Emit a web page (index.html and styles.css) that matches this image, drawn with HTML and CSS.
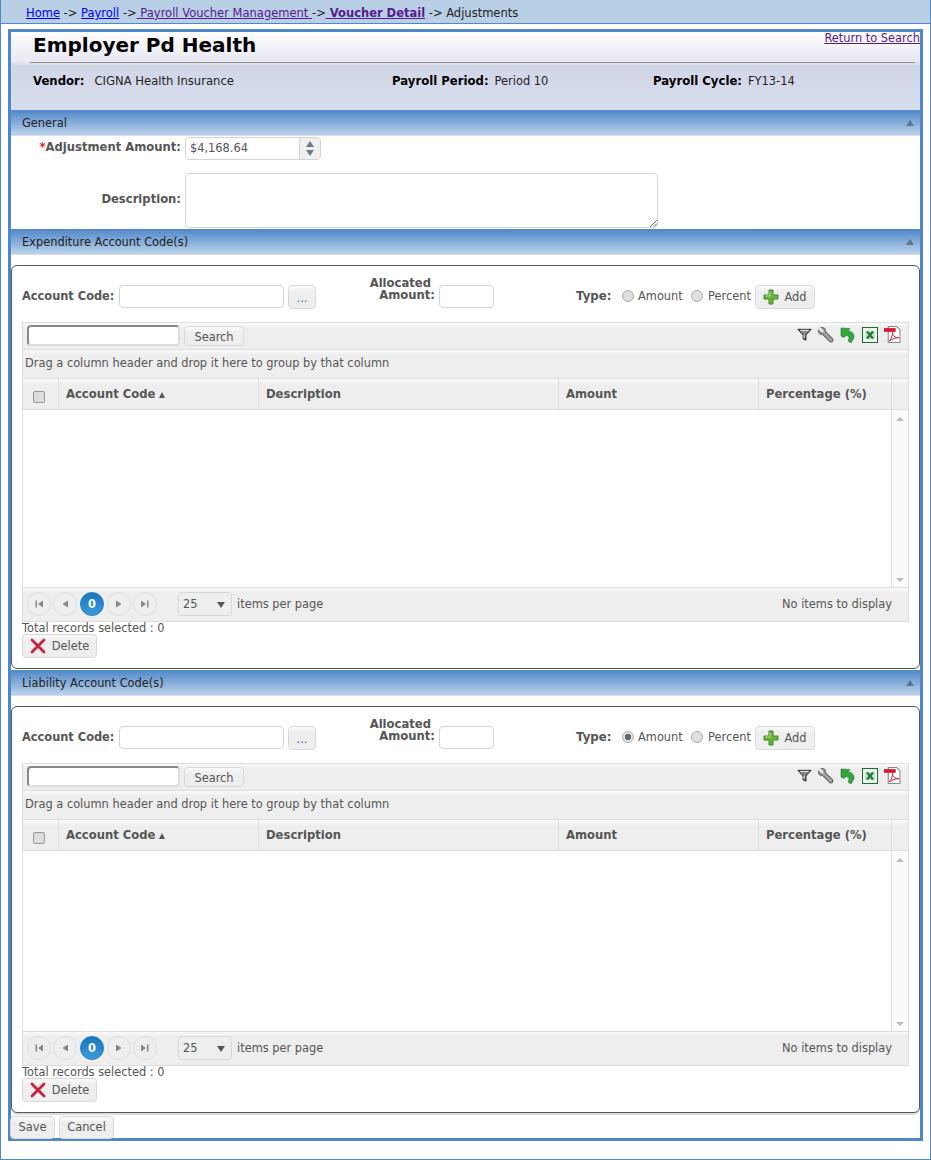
FILE: index.html
```html
<!DOCTYPE html>
<html lang="en">
<head>
<meta charset="utf-8">
<title>Adjustments</title>
<link rel="stylesheet" href="styles.css">
</head>
<body>
<svg class="defs" width="0" height="0" aria-hidden="true">
  <symbol id="i-plus" viewBox="0 0 16 16"><path d="M6 1h4v5h5v4h-5v5H6v-5H1V6h5z" fill="#6cb33f" stroke="#3f8a2a" stroke-width="1" stroke-linejoin="round"/><path d="M7 2.500v4.500H2.500" fill="none" stroke="#b5e08e" stroke-width="1"/></symbol>
  <symbol id="i-x" viewBox="0 0 16 16"><path d="M2 2l12 12M14 2L2 14" stroke="#c8203c" stroke-width="2.800" stroke-linecap="round"/></symbol>
  <symbol id="i-filter" viewBox="0 0 16 16"><path d="M1 2.500h14L9.500 8.500V14L6.500 12.500v-4z" fill="#888" stroke="#111" stroke-width="1"/><path d="M3.500 3.500h9M7.500 8.500v3" stroke="#fff"/></symbol>
  <symbol id="i-wrench" viewBox="0 0 16 16"><path d="M4.500 4.500L13 13" stroke="#555" stroke-width="4.600" stroke-linecap="round"/><circle cx="4" cy="4" r="3.700" fill="#8a8f94" stroke="#555" stroke-width=".7"/><path d="M4.500 4.500L13 13" stroke="#a0a6ab" stroke-width="3" stroke-linecap="round"/><path d="M0 2L2 0l4 4-2 1.500z" fill="#eee"/></symbol>
  <symbol id="i-arrow" viewBox="0 0 16 16"><path d="M1 1l9 .500-2 2.200c3.500.3 6.500 3 6 6.800l-3 5.500-3-2c1.500-2.500 1.500-4.500-1.500-5.500L3.500 10.500 1 9z" fill="#37a53f" stroke="#1f7a2c" stroke-width=".6"/></symbol>
  <symbol id="i-excel" viewBox="0 0 16 16"><rect x=".5" y=".5" width="15" height="15" fill="#eef5ea" stroke="#1d6b34"/><path d="M3 4h10v8H3z" fill="#c9dfc0"/><path d="M5 4.500l6 7M11 4.500l-6 7" stroke="#1d7a3a" stroke-width="2.200"/></symbol>
  <symbol id="i-pdf" viewBox="0 0 16 16"><path d="M4 .500h8l3 3v12H4z" fill="#fff" stroke="#888"/><path d="M0 2h11v3.500H0z" fill="#d8182c"/><path d="M5 14c2-2 3-5 3-8 0 3 2 5 6 5-3 0-6 1-9 3z" fill="none" stroke="#d8182c" stroke-width=".9"/></symbol>
  <symbol id="i-first" viewBox="0 0 10 10"><path d="M1.500 1.500h1.500v7H1.500zM9 1.500v7L4 5z" fill="#888"/></symbol>
  <symbol id="i-prev" viewBox="0 0 10 10"><path d="M8 1.500v7L2.500 5z" fill="#888"/></symbol>
  <symbol id="i-next" viewBox="0 0 10 10"><path d="M2 1.500v7L7.500 5z" fill="#888"/></symbol>
  <symbol id="i-last" viewBox="0 0 10 10"><path d="M7 1.500h1.500v7H7zM1 1.500v7L6 5z" fill="#888"/></symbol>
</svg>

<div class="page">
  <nav class="crumbs">
    <a class="link" href="#">Home</a> -&gt; <a class="link" href="#">Payroll</a> -&gt;<a class="visited" href="#"> Payroll Voucher Management </a>-&gt;<a class="visited strong" href="#"> Voucher Detail</a> -&gt; Adjustments
  </nav>

  <main class="main">
    <header class="head">
      <div class="head-top">
        <h1 class="title">Employer Pd Health</h1>
        <a class="visited" href="#">Return to Search</a>
      </div>
      <div class="head-info">
        <div class="info info-vendor"><b>Vendor:</b><span>CIGNA Health Insurance</span></div>
        <div class="info info-period"><b>Payroll Period:</b><span>Period 10</span></div>
        <div class="info info-cycle"><b>Payroll Cycle:</b><span>FY13-14</span></div>
      </div>
    </header>

    <div class="bar"><span>General</span><i class="tri"></i></div>
    <section class="general">
      <div class="gen-row gen-amount">
        <label class="gen-label"><em>*</em>Adjustment Amount:</label>
        <div class="spin">
          <span class="spin-val">$4,168.64</span>
          <span class="spin-btns"><i class="up"></i><i class="down"></i></span>
        </div>
      </div>
      <div class="gen-row gen-desc">
        <label class="gen-label">Description:</label>
        <div class="area"><svg class="grip" width="8" height="8" viewBox="0 0 8 8"><path d="M1 8l7-7M4.500 8L8 4.500" stroke="#666" fill="none"/></svg></div>
      </div>
    </section>

    <div class="bar"><span>Expenditure Account Code(s)</span><i class="tri"></i></div>
    <section class="panel panel-a">
      <div class="form">
        <label class="lbl lbl-code">Account Code:</label>
        <span class="field field-code"></span>
        <button class="btn btn-dots">...</button>
        <label class="lbl lbl-alloc">Allocated&nbsp;<br>Amount:</label>
        <span class="field field-amt"></span>
        <label class="lbl lbl-type">Type:</label>
        <span class="radio"></span><span class="radio-text rt-a">Amount</span>
        <span class="radio"></span><span class="radio-text rt-b">Percent</span>
        <button class="btn btn-add"><svg width="16" height="16"><use href="#i-plus"/></svg>Add</button>
      </div>
      <div class="grid">
        <div class="tools">
          <span class="search"></span>
          <button class="btn btn-search">Search</button>
          <span class="tool-icons">
            <svg width="15" height="15"><use href="#i-filter"/></svg>
            <svg width="16" height="16"><use href="#i-wrench"/></svg>
            <svg width="16" height="16"><use href="#i-arrow"/></svg>
            <svg width="16" height="16"><use href="#i-excel"/></svg>
            <svg width="17" height="17"><use href="#i-pdf"/></svg>
          </span>
        </div>
        <div class="group">Drag a column header and drop it here to group by that column</div>
        <div class="cols">
          <div class="col col-check"><span class="check"></span></div>
          <div class="col">Account Code <i class="sort"></i></div>
          <div class="col">Description</div>
          <div class="col">Amount</div>
          <div class="col">Percentage (%)</div>
          <div class="col col-end"></div>
        </div>
        <div class="content content-a">
          <div class="rows"></div>
          <div class="scroll"><i class="s-up"></i><i class="s-down"></i></div>
        </div>
        <div class="pager">
          <span class="pg"><svg width="10" height="10"><use href="#i-first"/></svg></span>
          <span class="pg"><svg width="10" height="10"><use href="#i-prev"/></svg></span>
          <span class="pg pg-on">0</span>
          <span class="pg"><svg width="10" height="10"><use href="#i-next"/></svg></span>
          <span class="pg"><svg width="10" height="10"><use href="#i-last"/></svg></span>
          <span class="select">25<i class="sel-arrow"></i></span>
          <span class="per">items per page</span>
          <span class="none">No items to display</span>
        </div>
      </div>
      <div class="total">Total records selected : 0</div>
      <button class="btn btn-del"><svg width="16" height="16"><use href="#i-x"/></svg>Delete</button>
    </section>

    <div class="bar bar-c"><span>Liability Account Code(s)</span><i class="tri"></i></div>
    <section class="panel panel-b">
      <div class="form">
        <label class="lbl lbl-code">Account Code:</label>
        <span class="field field-code"></span>
        <button class="btn btn-dots">...</button>
        <label class="lbl lbl-alloc">Allocated&nbsp;<br>Amount:</label>
        <span class="field field-amt"></span>
        <label class="lbl lbl-type">Type:</label>
        <span class="radio radio-on"></span><span class="radio-text rt-a">Amount</span>
        <span class="radio"></span><span class="radio-text rt-b">Percent</span>
        <button class="btn btn-add"><svg width="16" height="16"><use href="#i-plus"/></svg>Add</button>
      </div>
      <div class="grid">
        <div class="tools">
          <span class="search"></span>
          <button class="btn btn-search">Search</button>
          <span class="tool-icons">
            <svg width="15" height="15"><use href="#i-filter"/></svg>
            <svg width="16" height="16"><use href="#i-wrench"/></svg>
            <svg width="16" height="16"><use href="#i-arrow"/></svg>
            <svg width="16" height="16"><use href="#i-excel"/></svg>
            <svg width="17" height="17"><use href="#i-pdf"/></svg>
          </span>
        </div>
        <div class="group">Drag a column header and drop it here to group by that column</div>
        <div class="cols">
          <div class="col col-check"><span class="check"></span></div>
          <div class="col">Account Code <i class="sort"></i></div>
          <div class="col">Description</div>
          <div class="col">Amount</div>
          <div class="col">Percentage (%)</div>
          <div class="col col-end"></div>
        </div>
        <div class="content content-b">
          <div class="rows"></div>
          <div class="scroll"><i class="s-up"></i><i class="s-down"></i></div>
        </div>
        <div class="pager">
          <span class="pg"><svg width="10" height="10"><use href="#i-first"/></svg></span>
          <span class="pg"><svg width="10" height="10"><use href="#i-prev"/></svg></span>
          <span class="pg pg-on">0</span>
          <span class="pg"><svg width="10" height="10"><use href="#i-next"/></svg></span>
          <span class="pg"><svg width="10" height="10"><use href="#i-last"/></svg></span>
          <span class="select">25<i class="sel-arrow"></i></span>
          <span class="per">items per page</span>
          <span class="none">No items to display</span>
        </div>
      </div>
      <div class="total">Total records selected : 0</div>
      <button class="btn btn-del"><svg width="16" height="16"><use href="#i-x"/></svg>Delete</button>
    </section>

    <footer class="foot">
      <button class="btn btn-save">Save</button>
      <button class="btn btn-cancel">Cancel</button>
    </footer>
  </main>
</div>
</body>
</html>
```

FILE: styles.css
```css
* { box-sizing: border-box; }
html, body { margin: 0; padding: 0; }
body {
  width: 931px;
  height: 1160px;
  overflow: hidden;
  background: #fff;
  font-family: "DejaVu Sans", Verdana, sans-serif;
  font-size: 11.4px;
  line-height: 13px;
  color: #555;
}
.defs { position: absolute; }
.page {
  height: 1160px;
  border: 1px solid #4f87c8;
  border-top: 0;
}
a { text-decoration: underline; }
.link { color: #0000ee; }
.visited { color: #551a8b; }
.strong { font-weight: bold; }

.crumbs {
  height: 24px;
  padding: 6px 0 0 25px;
  background: #b8cfe6;
  border-bottom: 1px solid #4f87c8;
  color: #222;
  font-size: 11.5px;
  line-height: 14px;
}

.main {
  width: 915px;
  height: 1112px;
  margin: 5px 0 0 7px;
  border: 3px solid #4f87c8;
}

.head {
  height: 78px;
  background: linear-gradient(#fff 0, #f4f4f9 12px, #e7e8f1 30px, #d0d7e5 34px, #d4d9ea 50px, #d9deee 78px);
}
.head-top {
  display: flex;
  justify-content: space-between;
  height: 31px;
  margin: 0 5px 0 19px;
  border-bottom: 1px solid #8f8f8f;
}
.head-top .visited { margin-right: -5px; }
.title {
  margin: 1px 0 0 3px;
  font-size: 20px;
  line-height: 24px;
  font-weight: bold;
  color: #000;
}
.head-info {
  display: flex;
  padding: 12px 0 0 22px;
  color: #222;
}
.info { display: flex; gap: 6px; }
.info b { color: #000; font-size: 11.7px; }
.info-vendor { width: 359px; gap: 10px; }
.info-vendor span { font-size: 11.6px; }
.info-period { width: 261px; }

.bar {
  display: flex;
  justify-content: space-between;
  align-items: center;
  height: 26px;
  padding: 2px 6px 0 11px;
  background: linear-gradient(#4f87c8, #bcd3ec);
  border-bottom: 1px solid #d8dde4;
  color: #222;
}
.tri {
  width: 0; height: 0;
  border-left: 4px solid transparent;
  border-right: 4px solid transparent;
  border-bottom: 6px solid #5f7590;
  margin-top: -2px;
}
.bar-c { margin-top: 1px; }

.general { height: 93px; background: #fff; }
.gen-row { display: flex; }
.gen-label {
  width: 170px;
  text-align: right;
  font-weight: bold;
  color: #555;
  font-size: 11.6px;
}
.gen-label em { color: #d8202c; font-style: normal; }
.gen-amount { height: 37px; padding-top: 1px; }
.gen-amount .gen-label { padding-top: 4px; }
.gen-desc .gen-label { padding-top: 20px; }
.spin {
  display: flex;
  width: 136px;
  height: 23px;
  margin-left: 4px;
  border: 1px solid #d4d4d4;
  border-radius: 4px;
}
.spin-val { flex: 1; padding: 4px 0 0 4px; color: #555; }
.spin-btns {
  width: 21px;
  display: flex;
  flex-direction: column;
  align-items: center;
  justify-content: center;
  gap: 3px;
  background: #f0f0f0;
  border-left: 1px solid #d4d4d4;
  border-radius: 0 3px 3px 0;
}
.up, .down { width: 0; height: 0; border-left: 4px solid transparent; border-right: 4px solid transparent; }
.up { border-bottom: 6px solid #6f7b88; }
.down { border-top: 6px solid #6f7b88; }
.area {
  position: relative;
  width: 473px;
  height: 55px;
  margin-left: 4px;
  border: 1px solid #d4d4d4;
  border-radius: 4px;
  background: #fff;
}
.grip { position: absolute; right: 0; bottom: 0; }

.panel {
  width: 909px;
  margin: 10px 0 0 0;
  padding: 0 10px;
  border: 1px solid #555;
  border-radius: 6px;
  background: #fff;
}
.panel-a { height: 404px; }
.panel-b { height: 407px; box-shadow: 0 2px 0 #ddd; }

.form {
  display: flex;
  align-items: center;
  height: 56px;
  padding-top: 5px;
  white-space: nowrap;
}
.lbl { font-weight: bold; color: #555; }
.lbl-code { width: 97px; }
.field {
  height: 23px;
  border: 1px solid #d4d4d4;
  border-radius: 4px;
  background: #fff;
}
.field-code { width: 165px; }
.field-amt { width: 55px; margin-left: 4px; }
.btn {
  font: inherit;
  color: #555;
  background: linear-gradient(#fafafa, #eee 6px);
  border: 1px solid #d9d9d9;
  border-radius: 4px;
  padding: 0;
  display: inline-flex;
  align-items: center;
  justify-content: center;
}
.btn-dots { width: 28px; height: 24px; margin-left: 4px; color: #2a6cb0; padding-top: 3px; }
.lbl-alloc { width: 119px; text-align: right; line-height: 12px; margin-top: -16px; font-size: 11.6px; }
.lbl-type { width: 46px; margin-left: 82px; font-size: 11.8px; }
.radio {
  width: 12px;
  height: 12px;
  border: 1px solid #aaa;
  border-radius: 50%;
  background: #e0e0e0;
  margin: 0 4px 2px 0;
}
.radio-on { background: radial-gradient(circle, #666 0 3px, #e4e4e4 3.500px); }
.radio-text { color: #555; }
.rt-a { width: 53px; }
.rt-b { width: 48px; padding-left: 1px; }
.btn-add { width: 60px; height: 24px; gap: 5px; padding-top: 1px; }

.grid {
  border: 1px solid #ddd;
  background: #eee;
}
.tools {
  display: flex;
  align-items: flex-start;
  height: 27px;
  padding: 2px 0 0 4px;
  border-bottom: 1px solid #ddd;
  background: linear-gradient(#fafafa, #eee 5px);
}
.search {
  width: 153px;
  height: 21px;
  background: #fff;
  border: 2px solid #ddd;
  border-top-color: #888;
  border-left-color: #888;
  border-radius: 4px;
}
.btn-search { width: 60px; height: 20px; margin: 1px 0 0 4px; padding-top: 3px; }
.tool-icons {
  display: flex;
  align-items: center;
  gap: 6px;
  margin-left: auto;
  margin-right: 7px;
  padding-top: 1px;
}
.group {
  height: 29px;
  padding: 7px 0 0 2px;
  border-bottom: 1px solid #ddd;
  background: linear-gradient(#fafafa, #eee 5px);
}
.cols {
  display: grid;
  grid-template-columns: 36px 200px 300px 200px 133px 1fr;
  height: 31px;
  border-bottom: 1px solid #ddd;
  background: linear-gradient(#fafafa, #eee 6px);
}
.col {
  display: flex;
  align-items: center;
  gap: 4px;
  padding: 0 0 0 7px;
  border-right: 1px solid #ddd;
  font-weight: bold;
  font-size: 11.6px;
  color: #555;
  white-space: nowrap;
}
.col-check { padding: 6px 0 0 10px; }
.col-end { border-right: 0; }
.check {
  width: 12px; height: 12px;
  border: 1px solid #999;
  border-radius: 2px;
  background: #ddd;
}
.sort {
  width: 0; height: 0;
  border-left: 3px solid transparent;
  border-right: 3px solid transparent;
  border-bottom: 6px solid #555;
  margin-top: 1px;
}
.content { display: flex; background: #fff; }
.content-a { height: 177px; }
.content-b { height: 180px; }
.rows { flex: 1; }
.scroll {
  width: 17px;
  display: flex;
  flex-direction: column;
  justify-content: space-between;
  align-items: center;
  padding: 7px 0 5px;
  border-left: 1px solid #ddd;
  background: #fafafa;
}
.s-up, .s-down { width: 0; height: 0; border-left: 4px solid transparent; border-right: 4px solid transparent; }
.s-up { border-bottom: 4px solid #bbb; }
.s-down { border-top: 4px solid #bbb; }
.pager {
  display: flex;
  align-items: center;
  height: 34px;
  padding: 0 16px 1px 4px;
  border-top: 1px solid #ddd;
  background: linear-gradient(#fafafa, #eee 5px);
}
.pg {
  display: flex;
  align-items: center;
  justify-content: center;
  width: 24px;
  height: 24px;
  margin-right: 2px;
  border: 1px solid #ddd;
  border-radius: 50%;
}
.pg-on {
  margin: 0 3px 0 1px;
  border-color: #1b78c4;
  background: linear-gradient(#1a77bd, #3a9bdc);
  color: #fff;
  font-weight: bold;
}
.select {
  position: relative;
  width: 54px;
  height: 24px;
  margin-left: 19px;
  padding: 5px 0 0 4px;
  border: 1px solid #d9d9d9;
  border-radius: 4px;
}
.sel-arrow {
  position: absolute;
  right: 6px;
  top: 9px;
  width: 0; height: 0;
  border-left: 4px solid transparent;
  border-right: 4px solid transparent;
  border-top: 6px solid #555;
}
.per { margin-left: 5px; }
.none { margin-left: auto; }
.total { height: 12px; line-height: 12px; white-space: nowrap; }
.btn-del { width: 75px; height: 24px; gap: 6px; }

.foot { display: flex; gap: 4px; margin: 3px 0 0 -1px; }
.btn-save { width: 45px; height: 23px; }
.btn-cancel { width: 55px; height: 23px; }
```
